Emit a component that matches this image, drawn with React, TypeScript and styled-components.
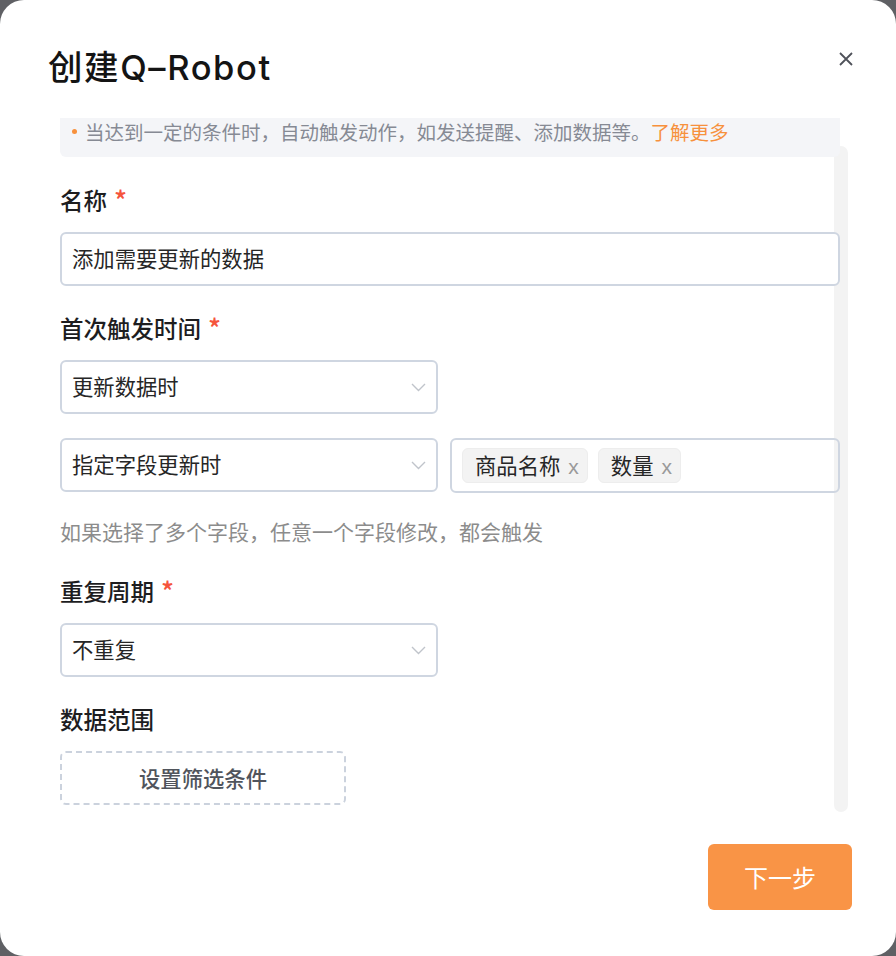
import React from "react";
import styled, { createGlobalStyle } from "styled-components";

const GlobalStyle = createGlobalStyle`
  * {
    box-sizing: border-box;
  }
  html,
  body {
    margin: 0;
    padding: 0;
    background: #5f6064;
  }
  body {
    font-family: "Noto Sans CJK SC", "Noto Sans", sans-serif;
    color: #1f1f1f;
  }
`;

const Modal = styled.div`
  width: 896px;
  height: 956px;
  background: #ffffff;
  border-radius: 24px;
  display: flex;
  flex-direction: column;
  overflow: hidden;
`;

const Header = styled.div`
  height: 118px;
  display: flex;
  justify-content: space-between;
  align-items: flex-start;
  padding: 44px 43px 0 48px;
`;

const Title = styled.h2`
  margin: 0;
  font-family: Inter, "Noto Sans CJK SC", sans-serif;
  font-size: 34.5px;
  letter-spacing: 1.6px;
  line-height: 48px;
  font-weight: 500;
  color: #141414;
`;

const CloseButton = styled.button`
  margin-top: 8px;
  width: 14px;
  height: 14px;
  padding: 0;
  border: none;
  background: transparent;
  display: flex;
  cursor: pointer;
`;

const Body = styled.div`
  flex: 1;
  position: relative;
  overflow: hidden;
  padding: 0 56px 0 60px;
`;

const ScrollThumb = styled.div`
  position: absolute;
  top: 28px;
  right: 48px;
  width: 14px;
  height: 666px;
  border-radius: 7px;
  background: #f3f3f3;
`;

const Content = styled.div`
  position: relative;
  margin-top: -13px;
`;

const Notice = styled.div`
  height: 52px;
  display: flex;
  align-items: center;
  gap: 8px;
  padding: 0 12px;
  border-radius: 6px;
  background: #f4f5f8;
  font-size: 19.5px;
  color: #868a94;
`;

const Dot = styled.span`
  width: 5px;
  height: 5px;
  border-radius: 50%;
  background: #f7913d;
  flex-shrink: 0;
`;

const Link = styled.a`
  color: #f7913d;
  text-decoration: none;
`;

const FormItem = styled.div<{ $gap?: number }>`
  margin-top: ${(p) => p.$gap ?? 26}px;
`;

const Label = styled.div`
  display: flex;
  align-items: center;
  gap: 7px;
  height: 32px;
  margin-bottom: 16px;
  font-size: 23.5px;
  font-weight: 500;
  color: #1d1d1f;
`;

const Required = styled.span`
  color: #f5543c;
  font-size: 27px;
  font-weight: 500;
  line-height: 1;
  margin-top: -2px;
`;

const Field = styled.div<{ $width?: number }>`
  width: ${(p) => (p.$width ? `${p.$width}px` : "100%")};
  height: 54px;
  display: flex;
  align-items: center;
  justify-content: space-between;
  padding: 0 10px 3px;
  border: 2px solid #cfd6e1;
  border-radius: 6px;
  background: #ffffff;
  font-size: 21.33px;
  color: #262626;
`;

const ChevronBox = styled.span`
  display: flex;
  margin-top: 3px;
`;

const Row = styled.div`
  display: flex;
  gap: 12px;
  margin-top: 24px;
`;

const TagField = styled.div`
  flex: 1;
  height: 55px;
  display: flex;
  align-items: center;
  gap: 10px;
  padding: 0 10px;
  border: 2px solid #cfd6e1;
  border-radius: 6px;
`;

const Tag = styled.span`
  height: 35px;
  display: flex;
  align-items: center;
  gap: 8px;
  padding: 0 8px 3px 12px;
  border: 1px solid #ededed;
  border-radius: 6px;
  background: #f3f3f3;
  font-size: 21.33px;
  color: #262626;
`;

const TagClose = styled.span`
  font-family: "Liberation Sans", sans-serif;
  color: #9a9a9a;
  font-size: 21px;
  line-height: 1;
  margin-top: 5px;
`;

const Help = styled.div`
  margin-top: 24px;
  line-height: 28px;
  font-size: 21px;
  color: #8c8c8c;
`;

const DashedButton = styled.button`
  width: 286px;
  height: 54px;
  padding-bottom: 3px;
  border: 2px dashed #cbd2dd;
  border-radius: 6px;
  background: #ffffff;
  font-family: inherit;
  font-size: 21.33px;
  font-weight: 500;
  color: #50545c;
  cursor: pointer;
`;

const Footer = styled.div`
  display: flex;
  justify-content: flex-end;
  padding: 32px 44px 46px;
`;

const PrimaryButton = styled.button`
  width: 144px;
  height: 66px;
  padding-bottom: 3px;
  border: none;
  border-radius: 6px;
  background: #f99446;
  color: #ffffff;
  font-family: inherit;
  font-size: 24px;
  cursor: pointer;
`;

const Chevron = () => (
  <ChevronBox>
    <svg width="15" height="9" viewBox="0 0 15 9" fill="none">
      <polyline points="1,1 7.5,7.5 14,1" stroke="#c0c4cb" strokeWidth="1.4" />
    </svg>
  </ChevronBox>
);

const CloseIcon = () => (
  <svg width="14" height="14" viewBox="0 0 14 14" fill="none">
    <path d="M1 1L13 13M13 1L1 13" stroke="#4f525a" strokeWidth="1.8" />
  </svg>
);

const Select = ({ value, width }: { value: string; width?: number }) => (
  <Field $width={width ?? 378}>
    <span>{value}</span>
    <Chevron />
  </Field>
);

const fields = ["商品名称", "数量"];

const App = () => {
  return (
    <>
      <GlobalStyle />
      <Modal>
        <Header>
          <Title>创建Q–Robot</Title>
          <CloseButton aria-label="关闭">
            <CloseIcon />
          </CloseButton>
        </Header>
        <Body>
          <ScrollThumb />
          <Content>
            <Notice>
              <Dot />
              <span>
                当达到一定的条件时，自动触发动作，如发送提醒、添加数据等。
                <Link href="#">了解更多</Link>
              </span>
            </Notice>

            <FormItem $gap={27}>
              <Label>
                名称<Required>*</Required>
              </Label>
              <Field>
                <span>添加需要更新的数据</span>
              </Field>
            </FormItem>

            <FormItem>
              <Label>
                首次触发时间<Required>*</Required>
              </Label>
              <Select value="更新数据时" />
              <Row>
                <Select value="指定字段更新时" />
                <TagField>
                  {fields.map((f) => (
                    <Tag key={f}>
                      {f}
                      <TagClose>x</TagClose>
                    </Tag>
                  ))}
                </TagField>
              </Row>
              <Help>如果选择了多个字段，任意一个字段修改，都会触发</Help>
            </FormItem>

            <FormItem $gap={30}>
              <Label>
                重复周期<Required>*</Required>
              </Label>
              <Select value="不重复" />
            </FormItem>

            <FormItem>
              <Label>数据范围</Label>
              <DashedButton>设置筛选条件</DashedButton>
            </FormItem>
          </Content>
        </Body>
        <Footer>
          <PrimaryButton>下一步</PrimaryButton>
        </Footer>
      </Modal>
    </>
  );
};

export default App;
